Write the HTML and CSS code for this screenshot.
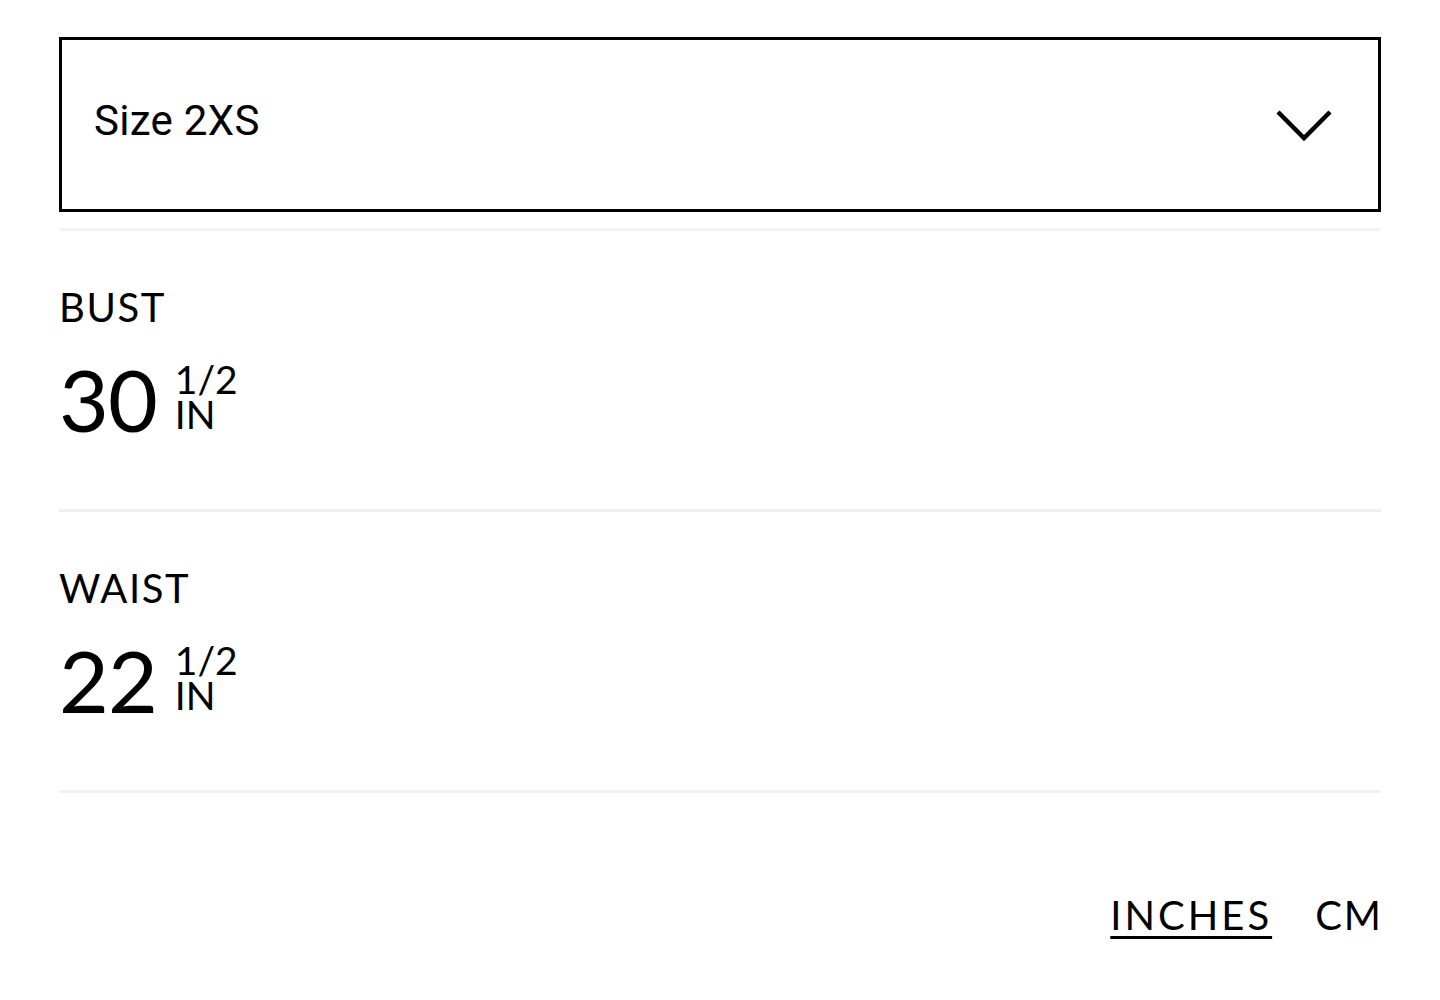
FILE: index.html
```html
<!DOCTYPE html>
<html>
<head>
<meta charset="utf-8">
<link rel="stylesheet" href="styles.css">
</head>
<body>
<div class="page">
  <div class="select">
    <span class="select-text">Size 2XS</span>
    <svg class="chevron" width="58" height="36" viewBox="0 0 58 36"><path d="M3 4 L29 30 L55 4" fill="none" stroke="#000" stroke-width="4.5"/></svg>
  </div>
  <div class="sep"></div>
  <div class="row">
    <div class="label">BUST</div>
    <div class="value"><span class="num">30</span><span class="frac">1/2<br>IN</span></div>
  </div>
  <div class="row">
    <div class="label">WAIST</div>
    <div class="value"><span class="num">22</span><span class="frac">1/2<br>IN</span></div>
  </div>
  <div class="units">
    <span class="unit-opt active">INCHES</span>
    <span class="unit-opt">CM</span>
  </div>
</div>
</body>
</html>
```
FILE: styles.css
```css
html, body { margin: 0; padding: 0; background: #fff; }
.page {
  padding: 37px 59px 0 59px;
  font-family: "Lato", "Liberation Sans", sans-serif;
  color: #000;
}
.select {
  height: 169px;
  border: 3px solid #000;
  display: flex;
  align-items: center;
  justify-content: space-between;
  padding: 0 47px 0 32px;
}
.select-text {
  font-family: "Roboto", "Liberation Sans", sans-serif;
  font-size: 42px;
  letter-spacing: 0.3px;
  margin-top: -8px;
}
.chevron { margin-top: 3px; margin-right: -2px; }
.sep {
  height: 3px;
  background: #f3f3f3;
  margin-top: 16px;
}
.row {
  padding-top: 52px;
  border-bottom: 3px solid #f1f1f1;
  height: 226px;
}
.label {
  font-size: 40px;
  line-height: 48px;
  letter-spacing: 1.6px;
}
.value {
  display: flex;
  align-items: flex-end;
  margin-top: 28px;
}
.num {
  font-size: 86px;
  line-height: 80px;
  letter-spacing: -1px;
}
.frac {
  display: block;
  font-size: 39px;
  line-height: 35px;
  margin-left: 18px;
  margin-bottom: 7px;
}
.units {
  display: flex;
  justify-content: flex-end;
  gap: 45px;
  margin-top: 98px;
  font-size: 40px;
}
.unit-opt { letter-spacing: 2px; margin-right: -2px; }
.unit-opt.active {
  letter-spacing: 3px;
  text-decoration: underline;
  text-decoration-thickness: 3px;
  text-underline-offset: 6px;
}
```
